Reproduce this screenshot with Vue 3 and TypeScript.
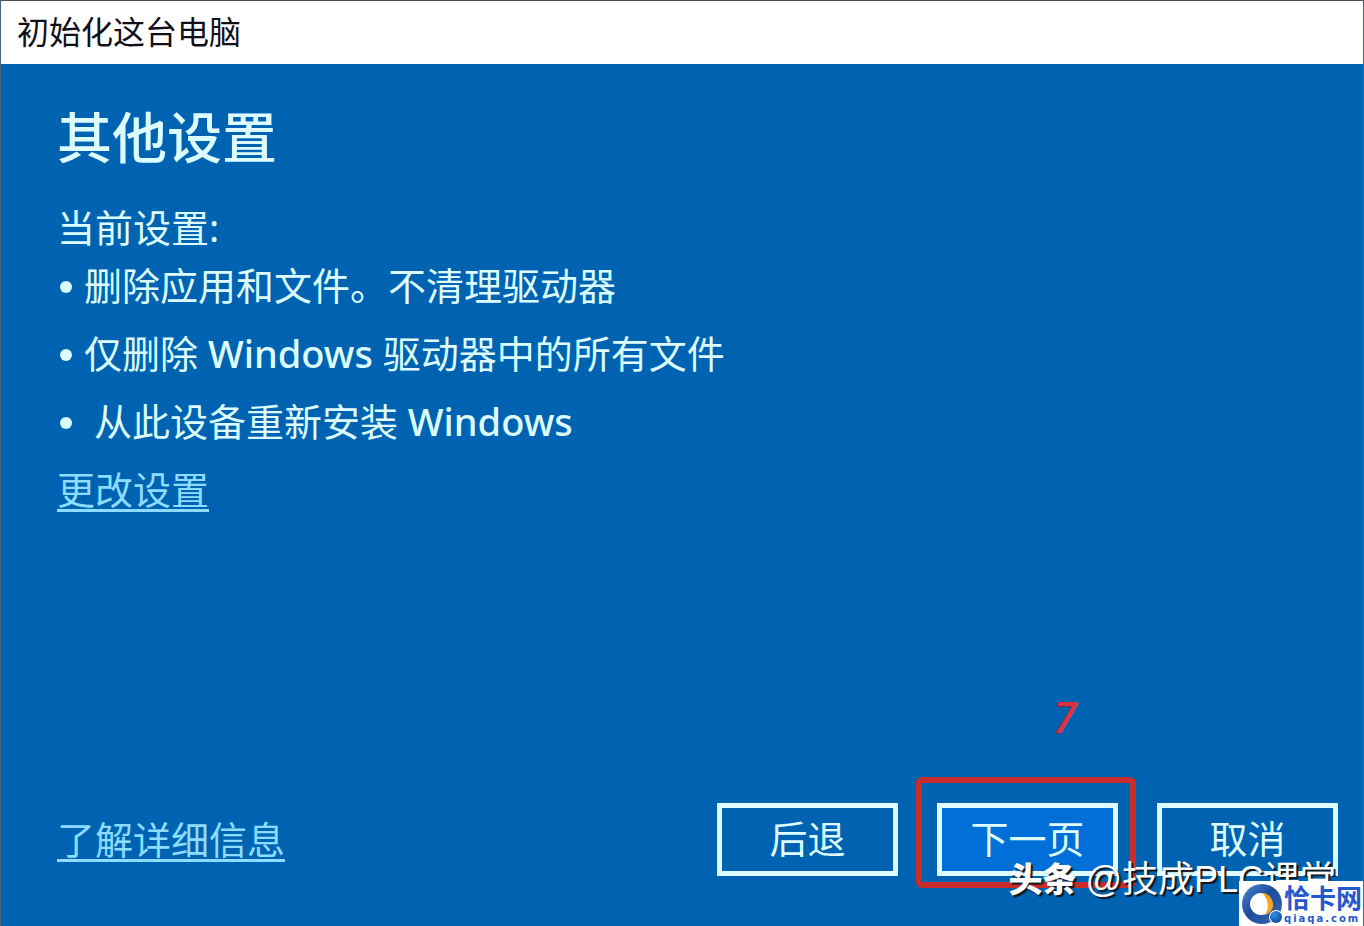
<script setup lang="ts">
interface Setting {
  before: string
  product?: string
  after?: string
}

const settings: Setting[] = [
  { before: '删除应用和文件。不清理驱动器' },
  { before: '仅删除 ', product: 'Windows', after: ' 驱动器中的所有文件' },
  { before: '\u00a0从此设备重新安装 ', product: 'Windows' },
]
</script>

<template>
  <div class="window">
    <header class="titlebar">初始化这台电脑</header>
    <main class="content">
      <h1>其他设置</h1>
      <p class="label">当前设置:</p>
      <ul class="settings">
        <li v-for="item in settings" :key="item.before">
          <span>{{ item.before }}<span v-if="item.product" class="product">{{ item.product }}</span>{{ item.after }}</span>
        </li>
      </ul>
      <a class="link change" href="#">更改设置</a>

      <footer class="footer">
        <a class="link details" href="#">了解详细信息</a>
        <div class="actions">
          <button type="button">后退</button>
          <div class="step">
            <button type="button" class="primary">下一页</button>
            <span class="frame"></span>
            <span class="number">7</span>
          </div>
          <button type="button">取消</button>
        </div>
      </footer>
    </main>

    <div class="watermark"><b>头条</b><span>@技成PLC课堂</span></div>
    <div class="brand">
      <svg width="42" height="42" viewBox="0 0 42 42" aria-hidden="true">
        <defs>
          <linearGradient id="ring" x1="0" y1="0" x2="1" y2="1">
            <stop offset="0" stop-color="#4a8ad6" />
            <stop offset="0.45" stop-color="#1d4d9c" />
            <stop offset="1" stop-color="#3a68b4" />
          </linearGradient>
          <radialGradient id="ball" cx="0.35" cy="0.3" r="0.8">
            <stop offset="0" stop-color="#2f8fe0" />
            <stop offset="1" stop-color="#0c4798" />
          </radialGradient>
        </defs>
        <circle cx="21" cy="21" r="20" fill="url(#ring)" />
        <circle cx="20" cy="21" r="11" fill="#fff" />
        <path d="M21 10 C27 15 29 24 24 32 C31 30 34 23 31 17 C29 12 25 10 21 10 Z" fill="#f5a320" />
        <circle cx="35" cy="34" r="7" fill="#fff" />
        <circle cx="35" cy="34" r="6" fill="url(#ball)" />
      </svg>
      <div class="brand-text">
        <strong>恰卡网</strong>
        <small>qiaqa.com</small>
      </div>
    </div>
  </div>
</template>

<style>
body {
  margin: 0;
}
</style>

<style scoped>
.window {
  position: relative;
  display: flex;
  flex-direction: column;
  box-sizing: border-box;
  min-height: 100vh;
  overflow: hidden;
  border-left: 1px solid #47617f;
  border-right: 1px solid #2d6ba8;
  background: #0063b1;
  color: #dcfcff;
  font-family: 'Noto Sans', 'Noto Sans CJK SC', sans-serif;
  font-size: 38px;
}

.titlebar {
  box-sizing: border-box;
  height: 64px;
  padding-left: 16px;
  border-top: 1px solid #514b52;
  background: #fff;
  color: #111018;
  font-size: 32px;
  line-height: 62px;
}

.content {
  display: flex;
  flex: 1;
  flex-direction: column;
  align-items: flex-start;
  padding: 38px 25px 50px 56px;
}

h1 {
  margin: 0;
  font-size: 55px;
  font-weight: 500;
  line-height: 70px;
}

.label {
  margin: 31px 0 0;
  line-height: 48px;
}

.settings {
  margin: 0;
  padding: 0;
  list-style: none;
}

.settings li {
  display: flex;
  align-items: center;
  gap: 12px;
  padding-left: 3px;
  line-height: 68px;
}

.settings li::before {
  width: 12px;
  height: 12px;
  margin-top: 4px;
  border-radius: 50%;
  background: #dcfcff;
  content: '';
}

.product {
  font-weight: 500;
}

.link {
  color: #8cdcff;
  text-decoration-thickness: 3px;
  text-underline-offset: 5px;
}

.change {
  line-height: 68px;
}

.details {
  padding-bottom: 4px;
}

.footer {
  display: flex;
  align-items: center;
  align-self: stretch;
  justify-content: space-between;
  margin-top: auto;
}

.actions {
  display: flex;
  gap: 39px;
}

button {
  display: block;
  box-sizing: border-box;
  width: 181px;
  height: 73px;
  padding: 0 0 4px;
  border: 5px solid #dcfcff;
  background: transparent;
  color: #dcfcff;
  font: inherit;
  line-height: 56px;
}

.primary {
  background: #0070d8;
}

.step {
  position: relative;
}

.frame {
  position: absolute;
  inset: -26px -18px -12px -21px;
  border: 6px solid #c92d2b;
  border-radius: 6px;
  pointer-events: none;
}

.number {
  position: absolute;
  bottom: 134px;
  left: 116px;
  color: #dc343f;
  font-family: 'Noto Sans', sans-serif;
  font-size: 44px;
  font-style: italic;
  font-weight: 500;
  line-height: 52px;
  text-shadow: -1px 1px 1px #6b2c55;
}

.watermark {
  position: absolute;
  right: 27px;
  bottom: 22px;
  display: flex;
  gap: 9px;
  color: #fff;
  font-family: 'Liberation Sans', 'Noto Sans CJK SC', sans-serif;
  font-size: 36px;
  line-height: 48px;
  text-shadow: 2px 2px 1px #10151d;
  white-space: nowrap;
}

.watermark b {
  font-size: 34px;
  font-weight: 900;
}

.brand {
  position: absolute;
  right: -1px;
  bottom: 0;
  display: flex;
  align-items: center;
  box-sizing: border-box;
  width: 125px;
  height: 45px;
  padding-left: 2px;
  background: #fff;
  color: #2458cd;
}

.brand svg {
  flex: none;
}

.brand-text {
  display: flex;
  flex-direction: column;
  padding-left: 1px;
}

.brand strong {
  font-size: 26px;
  font-weight: 700;
  line-height: 30px;
  white-space: nowrap;
}

.brand small {
  font-family: 'DejaVu Sans', sans-serif;
  font-size: 10px;
  font-weight: 700;
  letter-spacing: 2px;
  line-height: 12px;
}
</style>
